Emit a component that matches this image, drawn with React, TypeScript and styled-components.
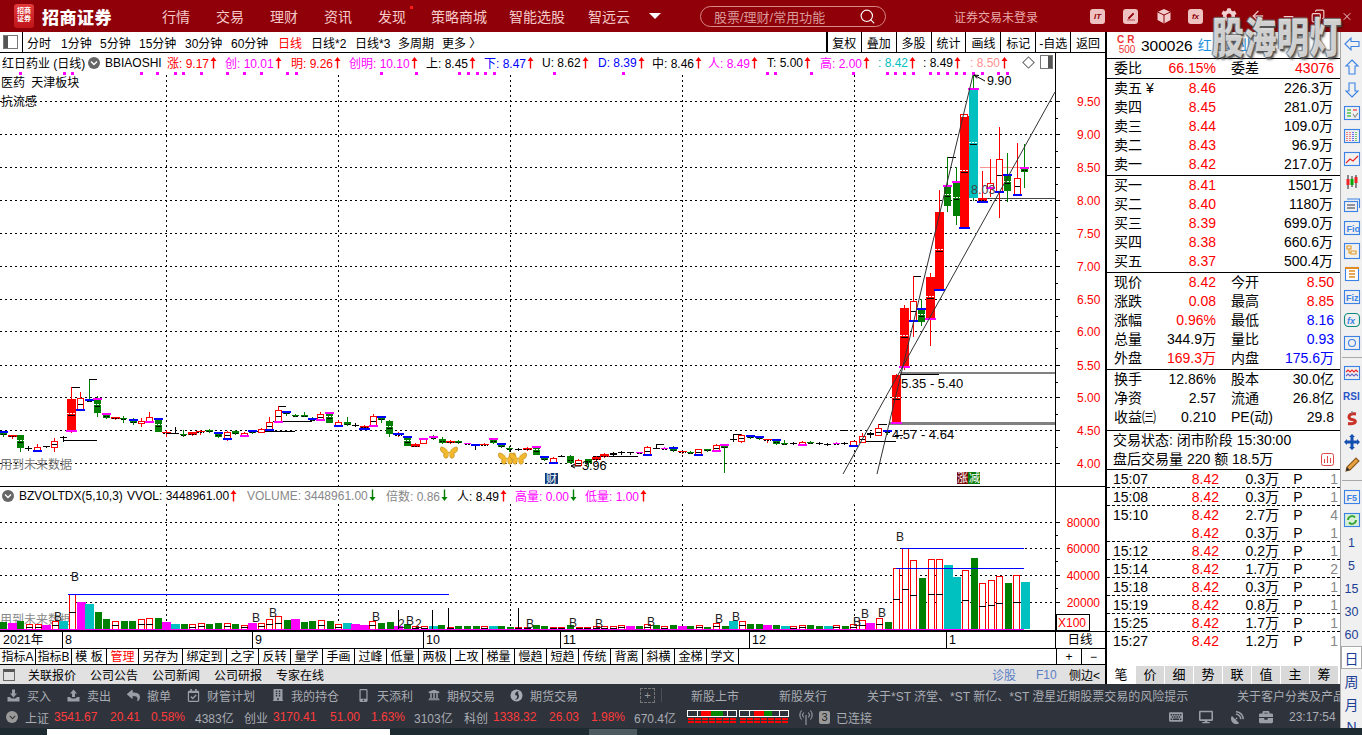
import React from "react";
import styled, { createGlobalStyle } from "styled-components";
import { Search, X, Minus, ArrowLeft, Copy } from "lucide-react";
import {
  FaReply, FaRegCalendarCheck, FaBuilding, FaMobileAlt, FaUniversity, FaKeyboard,
  FaDesktop, FaSatelliteDish, FaBriefcase, FaCog, FaChevronDown,
} from "react-icons/fa";

const FONT = `"Liberation Sans", "Noto Sans CJK SC", sans-serif`;

const Global = createGlobalStyle`
  html, body { margin: 0; padding: 0; width: 1362px; height: 735px; overflow: hidden; background: #fff; }
  body { font-family: ${FONT}; color: #000; }
  #root { width: 1362px; height: 735px; }
`;

const Page = styled.div`
  position: relative; width: 1362px; height: 735px; display: flex; flex-direction: column; overflow: hidden;
`;

/* ---------- title bar ---------- */
const TitleBar = styled.header`
  height: 32px; flex: none; background: #8f0008; display: flex; align-items: center; color: #f3c4c4;
`;
const LogoMark = styled.div`
  width: 20px; height: 24px; margin-left: 14px; border-radius: 3px; background: linear-gradient(#e23a3a, #c01418);
  color: #fff; font-size: 7px; line-height: 8px; text-align: center; font-weight: 700; padding-top: 3px; box-sizing: border-box;
`;
const Brand = styled.div`
  width: 128px; padding-left: 8px; box-sizing: border-box; font-size: 17px; font-weight: 900; letter-spacing: 0.5px; color: #fff;
`;
const NavItem = styled.div<{ $w: number }>`
  width: ${(p) => p.$w}px; flex: none; font-size: 14px; position: relative; color: #f6caca;
`;
const NavDot = styled.i`
  position: absolute; left: 32px; top: 0; width: 3px; height: 3px; background: #ff1a1a;
`;
const Caret = styled.div`
  width: 0; height: 0; border-left: 6px solid transparent; border-right: 6px solid transparent; border-top: 6px solid #fff; margin: 0 39px 0 0; flex: none;
`;
const SearchBox = styled.div`
  width: 186px; height: 21px; flex: none; border: 1px solid #d98a8a; border-radius: 11px; box-sizing: border-box;
  display: flex; align-items: center; justify-content: space-between; padding: 0 9px 0 13px; font-size: 13px; color: #d99a9a;
`;
const LoginText = styled.div`
  width: 136px; margin-left: 68px; font-size: 12px; color: #e9a9a9; flex: none;
`;
const TopIcons = styled.div`
  display: flex; align-items: center; flex: none; color: #f0c8c8;
`;
const TopSquare = styled.div`
  width: 15px; height: 15px; border-radius: 3px; background: #efc2c2; color: #8f0008; font-size: 8px; font-weight: 700; font-style: italic;
  display: flex; align-items: center; justify-content: center; margin-right: 18px; flex: none;
`;
const TopGap = styled.div<{ $w: number }>`
  width: ${(p) => p.$w}px; display: flex; align-items: center; justify-content: flex-start; flex: none;
`;

/* ---------- body ---------- */
const Body = styled.div`
  height: 696px; flex: none; display: flex;
`;
const Workspace = styled.div`
  width: 1340px; display: flex; flex-direction: column; flex: none;
`;
const MainRow = styled.div`
  height: 652px; flex: none; display: flex;
`;
const ChartColumn = styled.section`
  width: 1107px; flex: none; box-sizing: border-box; border-right: 2px solid #000; display: flex; flex-direction: column;
`;

const Toolbar = styled.div`
  height: 21px; flex: none; display: flex; align-items: center; border-bottom: 1px solid #000; box-sizing: border-box; font-size: 12px;
`;
const ToggleBox = styled.div`
  width: 13px; height: 12px; margin-left: 3px; border: 1px solid #777; background: linear-gradient(90deg, #555 0 4px, #fff 4px); flex: none;
`;
const ToolDivider = styled.div`
  width: 1px; height: 20px; background: #000; margin: 0 4px 0 4px; flex: none;
`;
const Period = styled.div<{ $w: number; $on?: boolean }>`
  width: ${(p) => p.$w}px; flex: none; color: ${(p) => (p.$on ? "#f00" : "#000")};
`;
const ToolTabs = styled.div`
  margin-left: auto; display: flex; height: 20px;
`;
const ToolTab = styled.div`
  width: 34.9px; box-sizing: border-box; border-left: 1px solid #000; display: flex; align-items: center; justify-content: center; font-size: 12px;
  &:first-child { border-left-width: 2px; }
`;

const IndicatorRow = styled.div<{ $h: number }>`
  width: 1056px; height: ${(p) => p.$h}px; flex: none; box-sizing: border-box; border-right: 1px solid #000;
  display: flex; align-items: center; font-size: 12.5px; white-space: nowrap; position: relative;
`;
const StockName = styled.div`
  width: 88px; padding-left: 2px; box-sizing: border-box; flex: none; font-size: 12px;
`;
const Badge = styled.div<{ $bg?: string; $mr?: number }>`
  width: 12px; height: 12px; border-radius: 50%; background: ${(p) => p.$bg || "#666"}; color: #fff; flex: none; display: flex; align-items: center; justify-content: center;
  margin-right: ${(p) => (p.$mr === undefined ? 5 : p.$mr)}px;
`;
const Plain = styled.div<{ $w: number; $c?: string }>`
  width: ${(p) => p.$w}px; flex: none; color: ${(p) => p.$c || "#000"}; display: flex; align-items: center; font-size: 12px;
`;
const RowTools = styled.div`
  position: absolute; right: 2px; top: 2px; display: flex; align-items: center; gap: 7px;
`;
const Diamond = styled.i`
  width: 7px; height: 7px; border: 1px solid #666; transform: rotate(45deg); display: block;
`;
const SideBox = styled.i`
  width: 13px; height: 14px; border: 1px solid #777; box-sizing: border-box; background: linear-gradient(90deg, #fff 0 7px, #555 7px); display: block;
`;

const ChartSvg = styled.svg`
  display: block; flex: none; font-family: ${FONT};
`;
const PriceWrap = styled.div`
  position: relative; height: 414px; flex: none; border-bottom: 0;
`;
const Overlay = styled.div<{ $t: number }>`
  position: absolute; left: 1px; top: ${(p) => p.$t}px; font-size: 12px; line-height: 16px; word-spacing: 3px;
`;
const Rule = styled.div`
  height: 1px; background: #000; flex: none;
`;

const DateRow = styled.div`
  height: 16px; flex: none; display: flex; border-top: 1px solid #000; font-size: 12.5px;
`;
const DateCell = styled.div<{ $w: number }>`
  width: ${(p) => p.$w}px; flex: none; box-sizing: border-box; border-left: 1px solid #000; padding-left: 2px; line-height: 16px;
  &:first-child { border-left: 0; padding-left: 3px; }
`;
const TabRow = styled.div`
  height: 15px; flex: none; display: flex; border-top: 1px solid #000; border-bottom: 1px solid #000; font-size: 12px;
`;
const IndexTab = styled.div<{ $w: number; $on?: boolean }>`
  width: ${(p) => p.$w}px; flex: none; box-sizing: border-box; border-right: 1px solid #000; text-align: center; line-height: 16px; color: ${(p) => (p.$on ? "#f00" : "#000")};
`;
const RightCell = styled.div<{ $w: number }>`
  width: ${(p) => p.$w}px; flex: none; box-sizing: border-box; border-left: 1px solid #000; text-align: center; line-height: 16px;
`;
const Spacer = styled.div`
  flex: 1;
`;
const InfoBar = styled.div`
  height: 19px; flex: none; width: 1105px; background: #e1e1e1; display: flex; align-items: center; font-size: 12px; white-space: nowrap;
`;
const InfoBox = styled.i`
  width: 12px; height: 12px; border: 1px solid #666; box-sizing: border-box; border-top: 3px solid #555; margin: 0 13px 0 3px; display: block; flex: none;
`;
const InfoLink = styled.div<{ $w: number; $c?: string }>`
  width: ${(p) => p.$w}px; flex: none; color: ${(p) => p.$c || "#000"};
`;

/* ---------- quote panel ---------- */
const Quote = styled.aside`
  width: 233px; flex: none; display: flex; flex-direction: column; font-size: 14px; line-height: 19px; white-space: nowrap;
`;
const QuoteHead = styled.div`
  height: 26px; flex: none; display: flex; align-items: center; padding-left: 10px; box-sizing: border-box;
`;
const CrMark = styled.div`
  width: 24px; box-sizing: border-box; padding-right: 4px; text-align: center; color: #ee3333; font-size: 10px; line-height: 10px; font-weight: 700; letter-spacing: 3px; flex: none;
  & > span { display: block; font-weight: 400; letter-spacing: 0; font-size: 10px; }
`;
const Code = styled.div`
  font-size: 15.5px; margin-right: 5px;
`;
const NameLink = styled.div`
  color: #1f8fdc; font-size: 14px;
`;
const Section = styled.div<{ $pb?: number }>`
  flex: none; border-top: 1px solid #000; padding-bottom: ${(p) => p.$pb || 0}px;
`;
const PairRow = styled.div`
  height: 19px; display: grid; grid-template-columns: 102px 103px; column-gap: 15px; padding-left: 7px; align-items: baseline;
`;
const Pair = styled.div`
  display: flex; justify-content: space-between; align-items: baseline;
`;
const Val = styled.span<{ $c?: string }>`
  color: ${(p) => p.$c || "#000"};
`;
const BookRow = styled.div`
  height: 19px; display: grid; grid-template-columns: 46px 56px 117px; padding-left: 7px; align-items: baseline; text-align: right;
  & > :first-child { text-align: left; }
`;
const StatusRow = styled.div`
  height: 19px; display: flex; align-items: center; padding: 0 6px; justify-content: space-between;
`;
const TickRow = styled.div<{ $dash?: boolean }>`
  height: 18px; line-height: 18px; box-sizing: border-box; display: grid; grid-template-columns: 56px 50px 60px 38px 21px; padding-left: 6px; align-items: baseline; text-align: right;
  border-bottom: ${(p) => (p.$dash ? "1px dashed #000" : "1px solid transparent")};
  & > :first-child { text-align: left; }
`;
const TickP = styled.span`
  text-align: center;
`;
const TickN = styled.span`
  color: #888;
`;
const Ticks = styled.div`
  flex: 1; border-top: 1px solid #000;
`;
const QuoteTabs = styled.div`
  height: 18px; flex: none; display: flex; background: #fff; font-size: 13px;
`;
const QuoteTab = styled.div<{ $on?: boolean }>`
  width: 28px; margin-right: 1px; flex: none; text-align: center; line-height: 18px; background: ${(p) => (p.$on ? "#fff" : "#d9d9d9")};
`;

/* ---------- dark bars ---------- */
const DarkBars = styled.div`
  height: 44px; flex: none; background: #2f333c; color: #a8acb3; font-size: 12px; white-space: nowrap; overflow: hidden;
`;
const DarkRow = styled.div`
  height: 22px; display: flex; align-items: center;
`;
const DarkCell = styled.div<{ $w: number; $c?: string; $ml?: number }>`
  width: ${(p) => p.$w}px; margin-left: ${(p) => p.$ml || 0}px; flex: none; display: flex; align-items: center; color: ${(p) => p.$c || "#a8acb3"};
  & > svg { margin-right: 7px; color: #9a9ea6; flex: none; }
`;
const PlusBox = styled.div`
  width: 13px; height: 13px; border: 1px dashed #777; color: #999; font-size: 11px; line-height: 12px; text-align: center;
`;
const VRule = styled.div`
  width: 1px; height: 14px; background: #4a4e57;
`;
const Conn = styled.div`
  width: 11px; height: 13px; border-radius: 2px; background: #999; color: #222; font-size: 11px; line-height: 13px; text-align: center; margin-right: 6px; flex: none;
`;

/* ---------- rail ---------- */
const Rail = styled.nav`
  width: 22px; height: 696px; overflow: hidden; flex: none; box-sizing: border-box; border-left: 1px solid #a9a9a9; background: #f0f0f0; display: flex; flex-direction: column; align-items: center;
`;
const RailItem = styled.div<{ $on?: boolean }>`
  width: 21px; height: 23px; flex: none; box-sizing: border-box; display: flex; align-items: center; justify-content: center; color: #1c3f95; font-size: 12.5px;
  ${(p) => (p.$on ? "background:#fff;border:1px solid #aaa;font-size:14px;" : "")}
`;
const RailChar = styled(RailItem)`
  font-size: 14px;
`;
const RailRule = styled.div<{ $m: number }>`
  width: 20px; height: 1px; background: #a9a9a9; flex: none; margin: ${(p) => p.$m}px 0;
`;

const Strip = styled.div`
  height: 7px; flex: none; background: #1e2b30; position: relative;
`;
const StripWhite = styled.i`
  position: absolute; left: 47px; top: 1px; width: 343px; height: 6px; background: #fff;
`;
const StripGrey = styled.i`
  position: absolute; left: 589px; top: 1px; width: 48px; height: 6px; background: #4d5a5f;
`;
const Watermark = styled.div`
  position: absolute; left: 1212px; top: 12px; font-size: 32px; font-weight: 900; letter-spacing: 0.5px; white-space: nowrap; transform: scaleY(1.3);
  color: rgba(255, 255, 255, 0.72); text-shadow: 1px 1px 1px #555, -1px 0 1px #777, 0 -1px 1px #777, 2px 2px 2px rgba(0, 0, 0, .45); pointer-events: none;
`;

/* ---------- small drawings ---------- */
const Up = ({ c = "#f00" }: { c?: string }) => (
  <svg width="7" height="13" viewBox="0 0 7 13" style={{ marginLeft: 1 }}>
    <path d="M3.5 1 L6.5 5 H4.2 V12.5 H2.8 V5 H.5 Z" fill={c} />
  </svg>
);
const Down = ({ c = "#008000" }: { c?: string }) => (
  <svg width="7" height="13" viewBox="0 0 7 13" style={{ marginLeft: 1 }}>
    <path d="M3.5 12 L6.5 8 H4.2 V.5 H2.8 V8 H.5 Z" fill={c} />
  </svg>
);
const Chevron = () => (
  <svg width="8" height="8" viewBox="0 0 8 8"><path d="M1 2.5 L4 5.5 L7 2.5" stroke="#fff" strokeWidth="1.4" fill="none" /></svg>
);
const Tray = ({ up }: { up?: boolean }) => (
  <svg width="13" height="13" viewBox="0 0 13 13" fill="#9a9ea6">
    <path d={up ? "M6.5 .5 L10 4.5 H8 V8 H5 V4.5 H3 Z" : "M5 .5 H8 V4.5 H10 L6.5 8.5 L3 4.5 H5 Z"} />
    <path d="M.5 8 H3 C4 10 9 10 10 8 H12.5 V12.5 H.5 Z" />
  </svg>
);
const Swirl = () => (
  <svg width="13" height="13" viewBox="0 0 13 13">
    <circle cx="6.5" cy="6.5" r="6" fill="#a8acb3" />
    <path d="M8.500 2 C5 3 4 6 6.500 6.500 C8 7 7 10 4.500 11 C8 11 10 8 8.500 5.500 C8 4.500 8 3 8.500 2 Z" fill="#2f333c" />
  </svg>
);
const BL = "#3b82e6";
const RI = ({ children }: { children: React.ReactNode }) => (
  <svg width="18" height="18" viewBox="0 0 18 18" fill="none" stroke={BL} strokeWidth="1.1">{children}</svg>
);

const Butterfly = ({ x, y }: { x: number; y: number }) => (
  <g transform={`translate(${x} ${y})`}>
    <path d="M0 1 C-2 -3 -8 -7 -8.500 -4 C-9 -1 -7 1 -4.500 1.500 C-6.500 3 -5 7 -2 6 C-1 5.500 -.3 3 0 1 Z" fill="#f3b92d" stroke="#b37d10" strokeWidth=".6" />
    <path d="M0 1 C2 -3 8 -7 8.500 -4 C9 -1 7 1 4.500 1.500 C6.500 3 5 7 2 6 C1 5.500 .3 3 0 1 Z" fill="#f3b92d" stroke="#b37d10" strokeWidth=".6" />
    <path d="M0 1 L0 6 M-.5 0 L-3 -6 M.5 0 L3 -6" stroke="#fff3c8" strokeWidth=".8" fill="none" />
  </g>
);

/* ---------- chart data ---------- */
type Raw = [number, number, number, number, number, string, string?];
const Z5: Raw[] = [
  [10,157,165,155,170,"g","bt"],[35,166,172,164,178,"R"],[61,165,203,165,215,"g"],[85,205,206,198,214,"k"],[112,200,210,192,214,"r","bb"],
  [138,199,202,197,205,"k"],[163,182,200,174,215,"r"],[188,172,174,168,186,"k"],[214,58,150,22,158,"R","mb"],[240,55,88,37,92,"r","bb"],
  [267,61,63,0,65,"g","bt"],[292,58,100,48,112,"g","mt"],[318,103,115,100,118,"g","mt"],[344,112,118,110,121,"R"],[370,114,117,108,128,"g"],
  [398,120,130,114,134,"g","bt"],[422,123,130,115,140,"r"],[448,112,124,95,128,"r","mb"],[473,118,155,116,156,"g","bt"],[498,155,160,150,170,"R"],
  [524,160,161,142,162,"k"],[550,162,166,150,172,"g"],[576,157,165,155,168,"R"],[601,152,157,150,164,"R"],[628,150,156,148,158,"g"],
  [653,160,170,158,174,"g","bt"],[680,155,175,152,182,"r","bb"],[706,153,163,150,166,"g"],[731,158,165,156,167,"r","mb"],[757,154,160,152,162,"g","bt"],
  [782,146,156,144,160,"r"],[808,125,148,112,150,"r","bb"],[833,90,122,78,124,"r","mb"],[859,96,102,94,108,"g","bt"],[885,104,108,102,112,"g"],
  [912,106,110,95,112,"g"],[936,116,120,110,124,"g","bt"],[961,103,118,97,120,"r","mb"],[988,100,128,95,129,"g","mt"],[1015,125,135,120,138,"r","bb"],
  [1040,125,135,112,137,"g"],[1066,135,136,128,142,"k"],[1092,137,143,136,145,"R","bb"],[1118,108,136,102,138,"r","mb"],[1142,110,120,108,128,"g","bt"],
  [1168,123,162,121,172,"g"],[1195,163,166,155,170,"R","bt"],[1220,172,197,170,198,"g","bt"],[1246,193,200,190,201,"R"],
];
const Z6: Raw[] = [
  [10,88,100,84,102,"r","mt"],[38,82,85,76,90,"g","mt"],[65,88,98,82,102,"g"],[90,92,100,90,102,"R"],[115,92,100,90,101,"g"],
  [140,99,101,98,102,"m"],[165,105,108,104,120,"k","bt"],[192,101,104,98,108,"R"],[218,88,100,85,102,"g","mt"],[244,103,110,102,114,"g","bt"],
  [268,115,118,108,125,"g"],[294,117,120,113,122,"k"],[320,113,120,112,122,"R"],[347,110,135,108,136,"g","mt"],[373,142,150,140,154,"g","bt"],
  [398,145,155,140,156,"r","bb"],[424,137,139,134,142,"k"],[449,138,160,136,162,"g"],[475,150,165,148,166,"r"],[503,148,160,146,172,"g"],
  [527,140,150,138,152,"R"],[553,133,140,130,145,"R"],[578,130,135,127,137,"k"],[604,127,130,124,134,"k"],[630,127,130,125,134,"k"],
  [656,127,129,125,132,"m"],[682,110,133,108,134,"r","bb"],[708,113,115,103,118,"k"],[733,114,116,112,118,"m"],[758,115,124,108,126,"g","bt"],
  [785,124,126,122,132,"R"],[810,125,130,122,132,"g"],[835,118,133,116,134,"r","bb"],[862,118,124,116,125,"g"],[887,105,121,103,122,"r","mb"],
  [913,105,113,103,190,"g","mt"],[938,88,90,73,95,"k"],[964,75,92,73,100,"r"],[990,78,85,76,87,"g","bt"],[1016,82,88,78,90,"g","bt"],
  [1042,88,90,86,98,"R"],[1067,90,103,88,104,"g","bt"],[1092,98,101,90,105,"g"],[1118,99,102,97,104,"k"],[1145,95,102,93,103,"r","mb"],
  [1170,95,100,93,102,"g"],[1196,99,103,97,105,"k"],[1222,103,106,100,107,"k"],[1248,99,102,96,103,"m"],[1272,99,103,97,104,"k"],
];
const Z4: Raw[] = [
  [40,514,525,512,527,"r","bb"],[65,497,515,490,518,"r"],[90,490,495,487,505,"k"],[115,475,495,463,497,"r"],[140,482,487,480,495,"g","bt"],
  [168,315,455,313,456,"R","mb"],[193,115,287,105,300,"R","mb"],[220,93,150,18,200,"r","bb"],[244,118,155,88,167,"g","bt"],[271,22,145,10,228,"R","mb"],
];
const Z3: Raw[] = [
  [298,425,657,360,660,"R","bb"],[322,347,407,262,425,"g","mt"],[349,337,437,292,465,"g","mt"],[373,138,472,132,472,"R","bb"],[400,58,385,15,392,"t","mt"],
  [425,385,393,303,400,"R","bb"],[450,340,352,268,380,"r","mb"],[478,268,364,172,445,"r","bb"],[502,314,362,250,397,"g","bt"],[530,325,373,220,374,"r","bb"],[553,293,305,222,355,"g","mt"],
];
const conv = (a: Raw[], ox: number, oy: number) =>
  a.map(([X, t, b, wt, wb, k, acc]) => ({ x: Math.round(ox + X / 3), t: Math.round(oy + t / 3), b: Math.round(oy + b / 3), wt: Math.round(oy + wt / 3), wb: Math.round(oy + wb / 3), k, acc }));
const CANDLES = [...conv(Z5, 0, 380), ...conv(Z6, 420, 410), ...conv(Z4, 840, 270), ...conv(Z3, 840, 70)];

const COL: Record<string, string> = { R: "#ff0000", r: "#ff0000", g: "#008000", t: "#00c0c0", m: "#ff00ff", k: "#000" };

const Candle = ({ c }: { c: (typeof CANDLES)[number] }) => {
  const w = c.k === "R" || c.k === "t" ? 9 : 7;
  const left = c.x - Math.floor(w / 2);
  const h = Math.max(1, c.b - c.t);
  const col = COL[c.k];
  const mid = Math.round((c.t + c.b) / 2) + 0.5;
  const wickCol = c.k === "t" ? "#008000" : col;
  return (
    <g shapeRendering="crispEdges">
      <line x1={c.x + 0.5} x2={c.x + 0.5} y1={c.wt} y2={c.wb} stroke={wickCol} />
      {c.k === "r" ? (
        <rect x={left + 0.5} y={c.t + 0.5} width={w - 1} height={h} fill="#fff" stroke={col} />
      ) : (
        <rect x={left} y={c.t} width={w} height={h} fill={col} />
      )}
      {c.k === "r" && h >= 5 && <line x1={left + 1} x2={left + w - 1} y1={mid} y2={mid} stroke="#000" />}
      {c.k !== "r" && c.k !== "k" && h >= 8 && (
        <>
          <line x1={left} x2={left + w} y1={mid - 2} y2={mid - 2} stroke="#fff" strokeDasharray="2 1" />
          <line x1={left + 1} x2={left + w - 1} y1={mid} y2={mid} stroke="#000" />
        </>
      )}
      {h < 8 && c.k !== "k" && c.k !== "r" && <line x1={left + 1} x2={left + w - 1} y1={mid} y2={mid} stroke="#000" strokeDasharray="2 1" />}
      {c.acc && (
        <rect x={left - 1} y={c.acc[1] === "t" ? c.t - 1 : c.b} width={w + 2} height={2} fill={c.acc[0] === "b" ? "#0000ff" : "#ff00ff"} />
      )}
    </g>
  );
};

const V = (s: string) => s.split(",").map((v) => ({ k: v[0], y: Number(v.slice(1)) }));
const VOLS = V(
  "g186,m190,g183,r193,r192,m195,r184,t182,r103,m126,t132,g156,g177,r184,g183,g183,r178,r175,g174,m186,t192,g192,r193,r190,g192,g189,r190,g192,r196,m189,r190,r178,r169,g180,m177,g186,g183,r181,g183,r192,t189,m192,m195,r184,g189,g186,m198,g192,r199,r199,t198,g195,r202," +
  "g198,g198,g198,r198,t198,g198,g201,r202,r200,g195,g198,r202,r202,g195,r202,r202,r198,r198,r198,r196,m198,g198,r193,g195,r198,g195,m198,g198,r196,g201,r190,g198,t183,r184,g192,g192,m195,g195,t198,r199,r196,g195,g198,t198,r196,g198,r193,r179,m189,r175,g186," +
  "r25,r-35,r0,g54,r-2,r-2,t15,t51,r31,g-6,r70,r60,r49,g69,r46,t66"
);
const BASE = 629;
const barX = (i: number) => Math.round(3.3 + i * 8.586);

const GRID_X = [166, 338, 510, 682, 854];
const PRICE = [
  ["9.50", 101], ["9.00", 134], ["8.50", 167], ["8.00", 200], ["7.50", 233], ["7.00", 266],
  ["6.50", 299], ["6.00", 331], ["5.50", 365], ["5.00", 397], ["4.50", 430], ["4.00", 463],
] as [string, number][];
const DOTS = [19, 63, 71, 140, 156, 174, 182, 200, 226, 243, 260, 286, 295, 380, 415, 458, 467, 476, 484, 493, 553, 622, 766, 774, 810, 852, 886, 894, 903, 912, 929, 937, 946, 955, 963, 972, 981, 997, 1006];
const CAPS: [number, number, number][] = [
  [71, 80, 387], [89, 97, 379], [63, 97, 440], [273, 312, 421], [253, 295, 431], [167, 178, 433], [278, 286, 406],
  [593, 638, 456], [656, 664, 444], [733, 741, 434], [878, 887, 424], [913, 921, 276], [947, 956, 157],
  [900, 939, 374], [895, 903, 435], [863, 896, 441], [840, 848, 430],
];

const PriceChart = () => (
  <ChartSvg width="1105" height="414" viewBox="0 72 1105 414">
    {DOTS.map((x) => <rect key={x} x={x} y={72} width={3} height={3} fill="#ff00ff" />)}
    <g stroke="#000" strokeDasharray="2 3" shapeRendering="crispEdges">
      {PRICE.map(([, y]) => <line key={y} x1={0} x2={1055} y1={y + 0.5} y2={y + 0.5} />)}
      {GRID_X.map((x) => <line key={x} x1={x + 0.5} x2={x + 0.5} y1={75} y2={486} />)}
    </g>
    <line x1={1055.5} x2={1055.5} y1={72} y2={486} stroke="#000" shapeRendering="crispEdges" />
    {PRICE.map(([t, y], i) => (
      <g key={t}>
        <line x1={1055} x2={1060} y1={y + 0.5} y2={y + 0.5} stroke="#000" shapeRendering="crispEdges" />
        {i < 11 && <line x1={1055} x2={1058} y1={y + 17} y2={y + 17} stroke="#000" shapeRendering="crispEdges" />}
        <text x={1077} y={y + 4.5} fontSize="12" fill="#f00">{t}</text>
      </g>
    ))}
    <rect x={889} y={422} width={166} height={3} fill="#808080" />
    <rect x={900} y={372} width={155} height={2} fill="#808080" />
    <line x1={982} x2={1055} y1={198.5} y2={198.5} stroke="#444" shapeRendering="crispEdges" />
    <line x1={980} x2={1027} y1={167.5} y2={167.5} stroke="#ff9090" shapeRendering="crispEdges" />
    {CAPS.map(([a, b, y]) => <line key={`${a}-${y}`} x1={a} x2={b} y1={y + 0.5} y2={y + 0.5} stroke="#000" shapeRendering="crispEdges" />)}
    {CANDLES.map((c, i) => <Candle key={i} c={c} />)}
    <rect x={960} y={114} width={7} height={3} fill="#fff" stroke="#f00" shapeRendering="crispEdges" />
    <line x1={843} y1={474} x2={1055} y2={92} stroke="#333" />
    <line x1={877} y1={474} x2={973} y2={75} stroke="#333" />
    <path d="M974 75 L985 81 M974 75 l5 .5 M974 75 l3 3.5" stroke="#000" fill="none" />
    <text x={987} y={85} fontSize="12.5">9.90</text>
    <text x={971} y={194} fontSize="12.5" fill="#444">8.03</text>
    <text x={901} y={388} fontSize="13">5.35 - 5.40</text>
    <text x={892} y={439} fontSize="13">4.57 - 4.64</text>
    <path d="M581 466 L571 466 M571 466 l4 -2 M571 466 l4 2" stroke="#000" fill="none" />
    <text x={582} y={470} fontSize="12.5">3.96</text>
    <Butterfly x={449} y={452} /><Butterfly x={507} y={458} /><Butterfly x={518} y={458} />
    <rect x={545} y={473} width={13} height={11} fill="#0f3a78" />
    <text x={546} y={483} fontSize="11" fill="#fff">财</text>
    <rect x={957} y={472} width={11} height={12} fill="#7a0a0a" />
    <rect x={968} y={472} width={12} height={12} fill="#0a7a0a" />
    <text x={957} y={482} fontSize="11" fill="#fff">涨</text>
    <text x={969} y={482} fontSize="11" fill="#fff">减</text>
    <text x={0} y={469} fontSize="12" fill="#777">用到未来数据</text>
  </ChartSvg>
);

const LETTERS: [string, number, number][] = [
  ["B", 71, 581], ["B", 54, 621], ["B", 252, 622], ["B", 269, 617], ["B", 372, 621], ["2", 398, 628], ["B", 406, 625], ["2", 415, 628],
  ["B", 526, 628], ["B", 569, 627], ["B", 595, 628], ["B", 647, 626], ["B", 715, 623], ["B", 732, 621], ["B", 853, 626], ["B", 861, 618], ["B", 878, 617], ["B", 896, 541],
];
const VOL_LABELS: [string, number][] = [["80000", 522], ["60000", 548], ["40000", 575], ["20000", 602]];
const VolumeChart = () => (
  <ChartSvg width="1105" height="127" viewBox="0 504 1105 127">
    <g stroke="#000" strokeDasharray="2 3" shapeRendering="crispEdges">
      {VOL_LABELS.map(([, y]) => <line key={y} x1={0} x2={1055} y1={y + 0.5} y2={y + 0.5} />)}
      {GRID_X.map((x) => <line key={x} x1={x + 0.5} x2={x + 0.5} y1={504} y2={630} />)}
    </g>
    <line x1={1055.5} x2={1055.5} y1={504} y2={631} stroke="#000" shapeRendering="crispEdges" />
    {VOL_LABELS.map(([t, y]) => (
      <g key={t}>
        <line x1={1055} x2={1060} y1={y + 0.5} y2={y + 0.5} stroke="#000" shapeRendering="crispEdges" />
        <line x1={1055} x2={1058} y1={y + 13.5} y2={y + 13.5} stroke="#000" shapeRendering="crispEdges" />
        <text x={1100} y={y + 4.5} fontSize="12" fill="#f00" textAnchor="end">{t}</text>
      </g>
    ))}
    <text x={0} y={624} fontSize="12" fill="#888">用到未来数据</text>
    <g shapeRendering="crispEdges">
      {VOLS.map((v, i) => {
        const x = barX(i);
        const top = Math.round(560 + v.y / 3);
        if (v.k === "r") {
          return (
            <g key={i}>
              <rect x={x - 3 + 0.5} y={top + 0.5} width={6} height={BASE - top} fill="#fff" stroke="#f00" />
              <line x1={x - 3} x2={x + 4} y1={Math.round((top + BASE) / 2) + 0.5} y2={Math.round((top + BASE) / 2) + 0.5} stroke="#000" />
            </g>
          );
        }
        const w = v.k === "g" ? 7 : 9;
        return <rect key={i} x={x - Math.floor(w / 2)} y={top} width={w} height={BASE - top} fill={COL[v.k]} />;
      })}
      {[398, 432, 448, 518].map((x, i) => <line key={x} x1={x + 0.5} x2={x + 0.5} y1={[610, 610, 608, 608][i]} y2={630} stroke="#000" />)}
      <line x1={68} x2={449} y1={594.5} y2={594.5} stroke="#0000ff" />
      <line x1={901} x2={1024} y1={548.5} y2={548.5} stroke="#0000ff" />
      <line x1={896} x2={1024} y1={568.5} y2={568.5} stroke="#0000ff" />
      <line x1={0} x2={1024} y1={629.5} y2={629.5} stroke="#ff00ff" />
      <line x1={0} x2={1055} y1={630.5} y2={630.5} stroke="#000" />
      <rect x={1056.5} y={614.5} width={33} height={16} fill="#fff" stroke="#000" />
    </g>
    {LETTERS.map(([t, x, y], i) => <text key={i} x={x} y={y} fontSize="12" fill="#222">{t}</text>)}
    <text x={1058} y={627} fontSize="12" fill="#f00">X100</text>
  </ChartSvg>
);

/* ---------- content ---------- */
const PERIODS: [string, number, boolean?][] = [["分时", 34], ["1分钟", 39], ["5分钟", 39], ["15分钟", 46], ["30分钟", 46], ["60分钟", 47], ["日线", 33, true], ["日线*2", 44], ["日线*3", 43], ["多周期", 44], ["更多 〉", 50]];
const TOOLS = ["复权", "叠加", "多股", "统计", "画线", "标记", "-自选", "返回"];
type Ind = [string, number, string, "u" | "d"];
const HEAD: Ind[] = [
  ["涨: 9.17", 58, "#f00", "u"], ["创: 10.01", 66, "#f0f", "u"], ["明: 9.26", 58, "#f00", "u"], ["创明: 10.10", 77, "#f0f", "u"],
  ["上: 8.45", 58, "#000", "u"], ["下: 8.47", 58, "#00f", "u"], ["U: 8.62", 56, "#000", "u"], ["D: 8.39", 54, "#00f", "u"],
  ["中: 8.46", 56, "#000", "u"], ["人: 8.49", 59, "#f0f", "u"], ["T: 5.00", 53, "#000", "u"], ["高: 2.00", 58, "#f0f", "u"],
  [": 8.42", 45, "#00c0c0", "u"], [": 8.49", 47, "#000", "u"], [": 8.50", 50, "#ff9090", "u"],
];
const VOLHEAD: Ind[] = [
  ["VVOL: 3448961.00", 120, "#000", "u"], ["VOLUME: 3448961.00", 139, "#888", "d"], ["倍数: 0.86", 71, "#888", "d"],
  ["人: 8.49", 58, "#000", "u"], ["高量: 0.00", 70, "#f0f", "d"], ["低量: 1.00", 70, "#f0f", "u"],
];
const DATES: [string, number][] = [["2021年", 62], ["8", 190], ["9", 171], ["10", 137], ["11", 189], ["12", 197], ["1", 109]];
const TABS: [string, number, boolean?][] = [
  ["指标A", 36], ["指标B", 36], ["模 板", 35], ["管理", 32, true], ["另存为", 44], ["绑定到", 44], ["之字", 32], ["反转", 32], ["量学", 32], ["手画", 32], ["过峰", 32], ["低量", 32], ["两极", 32],
  ["上攻", 32], ["梯量", 32], ["慢趋", 32], ["短趋", 32], ["传统", 32], ["背离", 32], ["斜横", 32], ["金梯", 32], ["学文", 32],
];
const R = "#f00", B = "#00f";
const SELLS = [["卖五 ¥", "8.46", "226.3万"], ["卖四", "8.45", "281.0万"], ["卖三", "8.44", "109.0万"], ["卖二", "8.43", "96.9万"], ["卖一", "8.42", "217.0万"]];
const BUYS = [["买一", "8.41", "1501万"], ["买二", "8.40", "1180万"], ["买三", "8.39", "699.0万"], ["买四", "8.38", "660.6万"], ["买五", "8.37", "500.4万"]];
const STATS: [string, string, string, string, string, string][] = [
  ["现价", "8.42", R, "今开", "8.50", R], ["涨跌", "0.08", R, "最高", "8.85", R], ["涨幅", "0.96%", R, "最低", "8.16", B],
  ["总量", "344.9万", "#000", "量比", "0.93", B], ["外盘", "169.3万", R, "内盘", "175.6万", B],
];
const FUND = [["换手", "12.86%", "股本", "30.0亿"], ["净资", "2.57", "流通", "26.8亿"], ["收益㈢", "0.210", "PE(动)", "29.8"]];
const TICKS: [string, string, string, boolean][] = [
  ["15:07", "0.3万", "1", true], ["15:08", "0.3万", "1", true], ["15:10", "2.7万", "4", false], ["", "0.3万", "1", true], ["15:12", "0.2万", "1", true],
  ["15:14", "1.7万", "2", true], ["15:18", "0.3万", "1", true], ["15:19", "0.8万", "1", true], ["15:25", "1.7万", "1", true], ["15:27", "1.2万", "1", false],
];

const RAIL_TOP: React.ReactNode[] = [
  <path d="M2 9 L8 3 V6.5 H16 V11.5 H8 V15 Z" />,
  <path d="M9 2 L15 8 H12 V16 H6 V8 H3 Z" />,
  <path d="M9 16 L15 10 H12 V2 H6 V10 H3 Z" />,
  <><rect x="1.5" y="2.5" width="15" height="13" /><path d="M4 6h4M4 9h4M4 12h4" stroke="#0a0" /><path d="M10 6h4" stroke="#e22" /><path d="M10 10l2 3 3-4" stroke="#888" /></>,
  <><rect x="1.5" y="2.5" width="15" height="13" /><path d="M4 5v9M7 5v9" stroke="#e22" strokeDasharray="1 1" /><path d="M10 5v9" stroke="#00f" strokeDasharray="1 1" /><path d="M13 5v9" stroke="#0a0" strokeDasharray="1 1" /></>,
  <><rect x="1.5" y="2.5" width="15" height="13" /><path d="M3 13 L7 9 L10 11 L15 6" stroke="#e22" /></>,
  <><path d="M5 2v14M9 3v11M13 2v13" stroke="#333" /><rect x="3.5" y="6" width="3" height="6" fill="#e22" stroke="none" /><rect x="7.5" y="6" width="3" height="6" fill="#0a0" stroke="none" /><rect x="11.5" y="4" width="3" height="6" fill="#e22" stroke="none" /></>,
  <><rect x="1.5" y="5.5" width="13" height="10" fill="#f0f0f0" /><path d="M4 3 H16.5 V12" /><path d="M4 9h8M4 12h8" stroke="#334" /></>,
  <><rect x="1.5" y="2.5" width="15" height="13" /><text x="3.5" y="13" fontSize="9" fill={BL} stroke="none" fontWeight="700">Fio</text></>,
  <><rect x="1.5" y="1.5" width="15" height="15" /><path d="M4 4h4v3H4zM8 9h5v3H8zM6 7v4h2" stroke="#e29b22" /></>,
  <><rect x="2.5" y="2.5" width="13" height="13" fill="#fff" /><path d="M6 6h6M6 9h6M6 12h6" stroke="#e08a20" strokeWidth="1.4" /><rect x="2" y="2" width="14" height="2" fill="#e08a20" stroke="none" /></>,
  <><rect x="1.5" y="2.5" width="15" height="13" /><text x="3" y="13" fontSize="9" fill={BL} stroke="none" fontWeight="700">Fiz</text></>,
  <><rect x="1.5" y="2.5" width="15" height="13" rx="4" stroke="#0a8a7a" /><text x="4" y="13" fontSize="9" fill={BL} stroke="none" fontStyle="italic" fontWeight="700">fx</text></>,
  <><rect x="1.5" y="2.5" width="15" height="13" /><circle cx="9" cy="9" r="3.5" /></>,
];
const RAIL_MID: React.ReactNode[] = [
  <><rect x="1.5" y="2.5" width="15" height="13" /><path d="M3 8l2-2 2 2 2-2 2 2 2-2 2 2" stroke="#e22" /><path d="M3 12l2-2 2 2 2-2 2 2 2-2 2 2" stroke="#66c" /></>,
  <text x="0" y="13" fontSize="10" fill="#2a55c8" stroke="none" fontWeight="900">RSI</text>,
  <><path d="M13 4C5 3 4 9 9 9.500s5 5-4 4" stroke="#c83228" strokeWidth="3" /><path d="M9 1v3" stroke="#777" /></>,
  <path d="M9 1l3 3H10.500V7.500H14V6l3 3-3 3v-1.500H10.500V14H12l-3 3-3-3h1.500V10.500H4V12L1 9l3-3v1.500h3.500V4H6z" fill="#1550b0" stroke="none" />,
  <><path d="M3 15 L4 11 L13 2 L16 5 L7 14 Z" fill="#e8a040" stroke="#8a5a20" /><path d="M3 15l1-4 3 3z" fill="#333" stroke="none" /></>,
];

const App = () => (
  <Page>
    <Global />
    <TitleBar>
      <LogoMark>招商<br />证券</LogoMark>
      <Brand>招商证券</Brand>
      <NavItem $w={54}>行情</NavItem>
      <NavItem $w={54}>交易</NavItem>
      <NavItem $w={54}>理财</NavItem>
      <NavItem $w={54}>资讯</NavItem>
      <NavItem $w={53}>发现<NavDot /></NavItem>
      <NavItem $w={78}>策略商城</NavItem>
      <NavItem $w={79}>智能选股</NavItem>
      <NavItem $w={61}>智远云</NavItem>
      <Caret />
      <SearchBox>股票/理财/常用功能<Search size={17} color="#fff" strokeWidth={1.6} /></SearchBox>
      <LoginText>证券交易未登录</LoginText>
      <TopIcons>
        <TopSquare>IT</TopSquare>
        <TopSquare>
          <svg width="10" height="10" viewBox="0 0 10 10"><path d="M1 9h8M2 7l5-5 1 1-5 5z" fill="#8f0008" stroke="#8f0008" strokeWidth=".6" /></svg>
        </TopSquare>
        <TopGap $w={32}>
          <svg width="16" height="16" viewBox="0 0 16 16"><path d="M8 1l6.500 3v8L8 15.500 1.500 12V4z" fill="#f2cccc" /><path d="M1.500 4L8 7l6.500-3M8 7v8.500" stroke="#8f0008" fill="none" /></svg>
        </TopGap>
        <TopSquare>fx</TopSquare>
        <TopGap $w={29}><FaCog size={16} color="#f0d0d0" /></TopGap>
        <TopGap $w={31}><ArrowLeft size={16} color="#e9bcbc" /></TopGap>
        <TopGap $w={30}><Minus size={15} color="#f0d0d0" /></TopGap>
        <TopGap $w={30}><Copy size={14} color="#f0d0d0" style={{ transform: "scaleX(-1)" }} /></TopGap>
        <TopGap $w={12}><X size={17} color="#f0d0d0" /></TopGap>
      </TopIcons>
    </TitleBar>

    <Body>
      <Workspace>
        <MainRow>
          <ChartColumn>
            <Toolbar>
              <ToggleBox />
              <ToolDivider />
              {PERIODS.map(([t, w, on]) => <Period key={t} $w={w} $on={on}>{t}</Period>)}
              <ToolTabs>{TOOLS.map((t) => <ToolTab key={t}>{t}</ToolTab>)}</ToolTabs>
            </Toolbar>
            <IndicatorRow $h={19}>
              <StockName>红日药业 (日线)</StockName>
              <Badge><Chevron /></Badge>
              <Plain $w={62}>BBIAOSHI</Plain>
              {HEAD.map(([t, w, c]) => <Plain key={t + c} $w={w} $c={c}>{t}<Up /></Plain>)}
              <RowTools><Diamond /><SideBox /></RowTools>
            </IndicatorRow>
            <PriceWrap>
              <PriceChart />
              <Overlay $t={3}>医药 天津板块</Overlay>
              <Overlay $t={22}>抗流感</Overlay>
            </PriceWrap>
            <Rule />
            <IndicatorRow $h={17}>
              <Plain $w={2} />
              <Badge><Chevron /></Badge>
              <Plain $w={108}>BZVOLTDX(5,10,3)</Plain>
              {VOLHEAD.map(([t, w, c, a]) => (
                <Plain key={t} $w={w} $c={c}>{t}{a === "u" ? <Up /> : <Down />}</Plain>
              ))}
            </IndicatorRow>
            <VolumeChart />
            <DateRow>
              {DATES.map(([t, w]) => <DateCell key={t} $w={w}>{t}</DateCell>)}
              <RightCell $w={49}>日线</RightCell>
            </DateRow>
            <TabRow>
              {TABS.map(([t, w, on]) => <IndexTab key={t} $w={w} $on={on}>{t}</IndexTab>)}
              <Spacer />
              <RightCell $w={25}>+</RightCell>
              <RightCell $w={24}>−</RightCell>
            </TabRow>
            <InfoBar>
              <InfoBox />
              <InfoLink $w={62}>关联报价</InfoLink>
              <InfoLink $w={62}>公司公告</InfoLink>
              <InfoLink $w={62}>公司新闻</InfoLink>
              <InfoLink $w={62}>公司研报</InfoLink>
              <InfoLink $w={716}>专家在线</InfoLink>
              <InfoLink $w={44} $c="#5b7fc4">诊股</InfoLink>
              <InfoLink $w={33} $c="#5b7fc4">F10</InfoLink>
              <InfoLink $w={36}>侧边&lt;</InfoLink>
            </InfoBar>
          </ChartColumn>

          <Quote>
            <QuoteHead>
              <CrMark>CR<span>500</span></CrMark>
              <Code>300026</Code>
              <NameLink>红日药业</NameLink>
            </QuoteHead>
            <Section>
              <PairRow>
                <Pair><span>委比</span><Val $c={R}>66.15%</Val></Pair>
                <Pair><span>委差</span><Val $c={R}>43076</Val></Pair>
              </PairRow>
            </Section>
            <Section $pb={1}>
              {SELLS.map(([a, b, c]) => <BookRow key={a}><span>{a}</span><Val $c={R}>{b}</Val><span>{c}</span></BookRow>)}
            </Section>
            <Section $pb={1}>
              {BUYS.map(([a, b, c]) => <BookRow key={a}><span>{a}</span><Val $c={R}>{b}</Val><span>{c}</span></BookRow>)}
            </Section>
            <Section $pb={1}>
              {STATS.map(([a, b, c, d, e, f]) => (
                <PairRow key={a}>
                  <Pair><span>{a}</span><Val $c={c}>{b}</Val></Pair>
                  <Pair><span>{d}</span><Val $c={f}>{e}</Val></Pair>
                </PairRow>
              ))}
            </Section>
            <Section $pb={3}>
              {FUND.map(([a, b, c, d]) => (
                <PairRow key={a}>
                  <Pair><span>{a}</span><span>{b}</span></Pair>
                  <Pair><span>{c}</span><span>{d}</span></Pair>
                </PairRow>
              ))}
            </Section>
            <Section>
              <StatusRow><span>交易状态: 闭市阶段 15:30:00</span></StatusRow>
              <StatusRow>
                <span>盘后交易量 220 额 18.5万</span>
                <svg width="13" height="13" viewBox="0 0 13 13" fill="none" stroke="#e04848"><rect x=".5" y=".5" width="12" height="12" rx="2" /><path d="M3.500 10V6M6.500 10V3M9.500 10V5" /></svg>
              </StatusRow>
            </Section>
            <Ticks>
              {TICKS.map(([t, v, n, d], i) => (
                <TickRow key={i} $dash={d}>
                  <span>{t}</span><Val $c={R}>8.42</Val><span>{v}</span><TickP>P</TickP><TickN>{n}</TickN>
                </TickRow>
              ))}
            </Ticks>
            <QuoteTabs>
              {["笔", "价", "细", "势", "联", "值", "主", "筹"].map((t, i) => <QuoteTab key={t} $on={i === 0}>{t}</QuoteTab>)}
            </QuoteTabs>
          </Quote>
        </MainRow>

        <DarkBars>
          <DarkRow>
            <DarkCell $ml={7} $w={60}><Tray />买入</DarkCell>
            <DarkCell $w={60}><Tray up />卖出</DarkCell>
            <DarkCell $w={60}><FaReply size={13} />撤单</DarkCell>
            <DarkCell $w={85}><FaRegCalendarCheck size={13} />财管计划</DarkCell>
            <DarkCell $w={85}><FaBuilding size={12} />我的持仓</DarkCell>
            <DarkCell $w={71}><FaMobileAlt size={13} />天添利</DarkCell>
            <DarkCell $w={82}><FaUniversity size={12} />期权交易</DarkCell>
            <DarkCell $w={130}><Swirl />期货交易</DarkCell>
            <DarkCell $w={21}><PlusBox>+</PlusBox></DarkCell>
            <DarkCell $w={30}><VRule /></DarkCell>
            <DarkCell $w={88}>新股上市</DarkCell>
            <DarkCell $w={88}>新股发行</DarkCell>
            <DarkCell $w={370}>关于*ST 济堂、*ST 新亿、*ST 澄星近期股票交易的风险提示</DarkCell>
            <DarkCell $w={103}>关于客户分类及产品</DarkCell>
          </DarkRow>
          <DarkRow>
            <DarkCell $ml={6} $w={19}><Badge $bg="#999" $mr={0}><FaChevronDown size={7} color="#333" /></Badge></DarkCell>
            <DarkCell $w={29}>上证</DarkCell>
            <DarkCell $w={56} $c="#ff3b3b">3541.67</DarkCell>
            <DarkCell $w={41} $c="#ff3b3b">20.41</DarkCell>
            <DarkCell $w={44} $c="#ff3b3b">0.58%</DarkCell>
            <DarkCell $w={49}>4383亿</DarkCell>
            <DarkCell $w={29}>创业</DarkCell>
            <DarkCell $w={57} $c="#ff3b3b">3170.41</DarkCell>
            <DarkCell $w={41} $c="#ff3b3b">51.00</DarkCell>
            <DarkCell $w={43} $c="#ff3b3b">1.63%</DarkCell>
            <DarkCell $w={50}>3103亿</DarkCell>
            <DarkCell $w={29}>科创</DarkCell>
            <DarkCell $w={56} $c="#ff3b3b">1338.32</DarkCell>
            <DarkCell $w={42} $c="#ff3b3b">26.03</DarkCell>
            <DarkCell $w={43} $c="#ff3b3b">1.98%</DarkCell>
            <DarkCell $w={53}>670.4亿</DarkCell>
            <DarkCell $w={112}>
              <svg width="103" height="14" viewBox="0 0 103 14" shapeRendering="crispEdges" style={{ margin: 0 }}>
                {[0, 52].map((ox) => (
                  <g key={ox} transform={`translate(${ox} 0)`}>
                    <rect x=".5" y=".5" width="49" height="6" fill="none" stroke="#fff" />
                    <rect x={ox ? 15 : 14} y="1" width={10} height="5" fill="#f00" />
                    <rect x={ox ? 25 : 24} y="1" width={ox ? 8 : 12} height="5" fill="#080" />
                    <path d="M10.500 1v5M40.500 1v5" stroke="#fff" />
                    {[0, 1, 2, 3, 4, 5, 6].map((i) => (
                      <g key={i} fill="#f00"><rect x={i * 7 + 1} y="8" width="6" height="2" /><rect x={i * 7 + 1} y="11" width="6" height="2" /></g>
                    ))}
                  </g>
                ))}
              </svg>
            </DarkCell>
            <DarkCell $w={20}>
              <svg width="14" height="15" viewBox="0 0 14 15" fill="none" stroke="#a8acb3" style={{ margin: 0 }}><path d="M7 5v10M4.500 2.500a4 4 0 0 0 0 5M9.500 2.500a4 4 0 0 1 0 5M2.500 .5a7 7 0 0 0 0 9M11.500 .5a7 7 0 0 1 0 9" /></svg>
            </DarkCell>
            <DarkCell $w={350}><Conn>3</Conn>已连接</DarkCell>
            <DarkCell $w={30}><FaKeyboard size={14} /></DarkCell>
            <DarkCell $w={32}><FaDesktop size={14} /></DarkCell>
            <DarkCell $w={28}><FaSatelliteDish size={13} /></DarkCell>
            <DarkCell $w={30}><FaBriefcase size={14} /></DarkCell>
            <DarkCell $w={50}>23:17:54</DarkCell>
          </DarkRow>
        </DarkBars>
      </Workspace>

      <Rail>
        {RAIL_TOP.map((ic, i) => <RailItem key={i}><RI>{ic}</RI></RailItem>)}
        <RailRule $m={3} />
        {RAIL_MID.map((ic, i) => <RailItem key={i}><RI>{ic}</RI></RailItem>)}
        <RailRule $m={4} />
        <RailItem><RI><rect x="1.5" y="2.5" width="15" height="13" /><text x="3.5" y="13" fontSize="9" fill={BL} stroke="none" fontWeight="700">F5</text></RI></RailItem>
        <RailItem><RI><rect x="1.5" y="2.5" width="15" height="13" fill="#d8f0d8" /><path d="M5 9a4 4 0 0 1 7-2.500M13 9a4 4 0 0 1-7 2.500" stroke="#3aa83a" strokeWidth="2" /></RI></RailItem>
        {["1", "5", "15", "30", "60"].map((t) => <RailItem key={t}>{t}</RailItem>)}
        <RailItem $on>日</RailItem>
        <RailChar>周</RailChar>
        <RailChar>月</RailChar>
        <RailChar>N</RailChar>
      </Rail>
    </Body>

    <Strip><StripWhite /><StripGrey /></Strip>
    <Watermark>股海明灯</Watermark>
  </Page>
);

export default App;
